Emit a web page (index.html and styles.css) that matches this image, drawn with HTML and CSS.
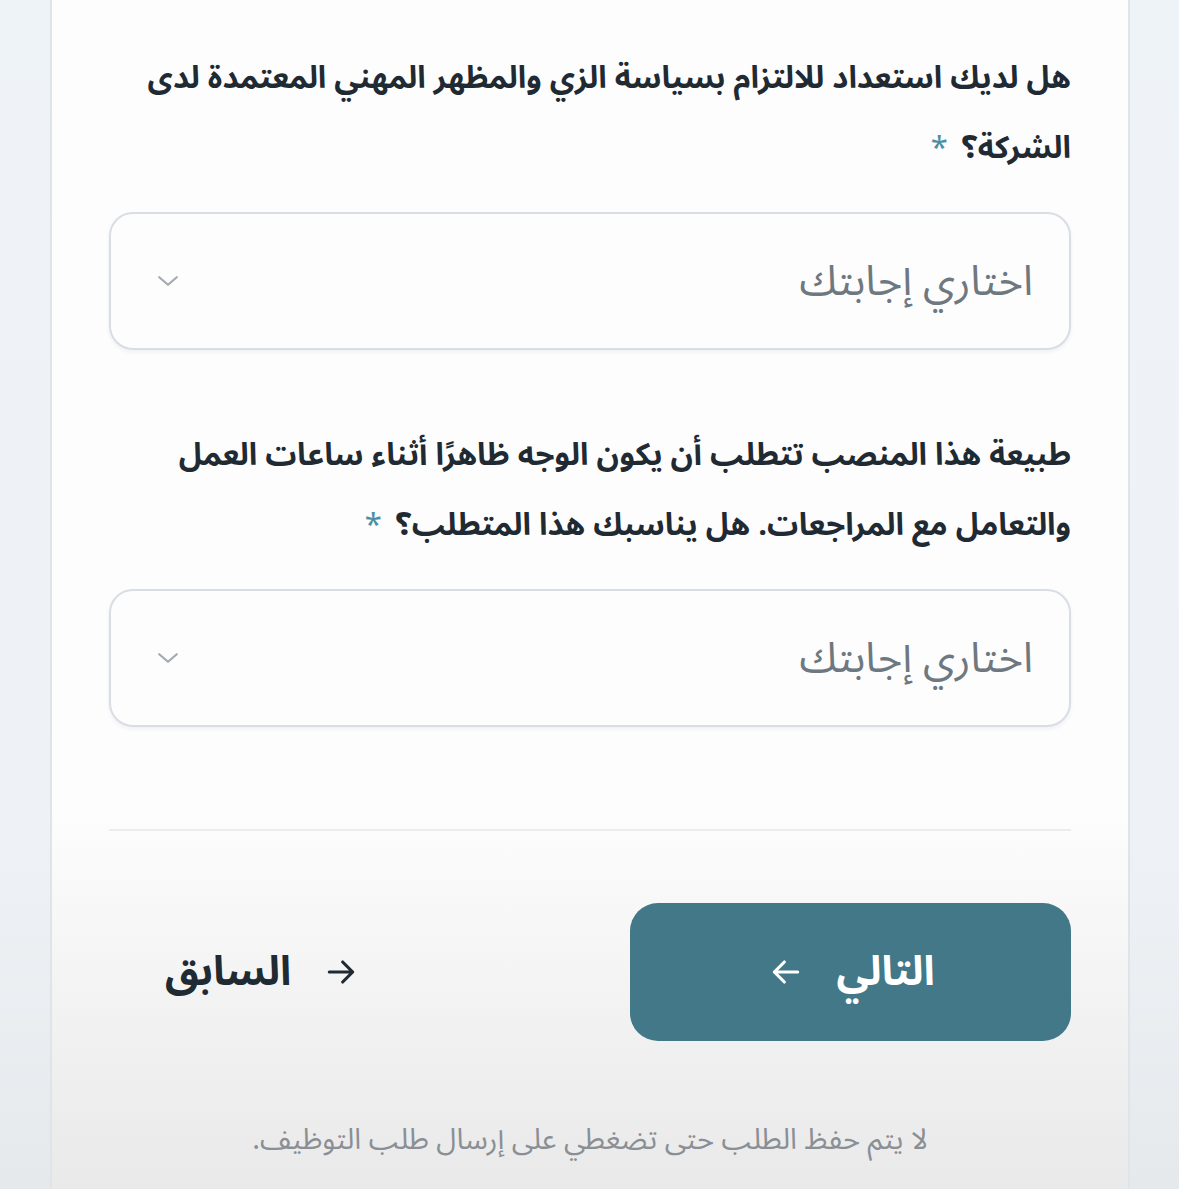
FILE: index.html
```html
<!DOCTYPE html>
<html lang="ar" dir="rtl">
<head>
    <meta charset="UTF-8">
    <meta name="viewport" content="width=device-width, initial-scale=1.0">
    <title>طلب التوظيف</title>
    <link rel="stylesheet" href="styles.css">
</head>
<body>

    <!-- Application step -->
    <div class="card">
        <form class="step">
            <div class="form-group">
                <label for="q-dress">هل لديك استعداد للالتزام بسياسة الزي والمظهر المهني المعتمدة لدى الشركة؟<span class="req">*</span></label>
                <div class="select">
                    <span class="placeholder">اختاري إجابتك</span>
                    <svg class="chevron" viewBox="0 0 24 24" width="30" height="30"><path d="M5 9l7 6 7-6" fill="none" stroke="#a3aab0" stroke-width="1.8" stroke-linecap="round" stroke-linejoin="round"/></svg>
                </div>
            </div>

            <div class="form-group">
                <label for="q-face">طبيعة هذا المنصب تتطلب أن يكون الوجه ظاهرًا أثناء ساعات العمل والتعامل مع المراجعات. هل يناسبك هذا المتطلب؟<span class="req">*</span></label>
                <div class="select">
                    <span class="placeholder">اختاري إجابتك</span>
                    <svg class="chevron" viewBox="0 0 24 24" width="30" height="30"><path d="M5 9l7 6 7-6" fill="none" stroke="#a3aab0" stroke-width="1.8" stroke-linecap="round" stroke-linejoin="round"/></svg>
                </div>
            </div>

            <hr class="divider">

            <div class="actions">
                <button type="button" class="btn btn-next">
                    التالي
                    <svg viewBox="0 0 24 24" width="40" height="40"><path d="M19 12H5M11 6l-6 6 6 6" fill="none" stroke="#fff" stroke-width="1.9" stroke-linecap="round" stroke-linejoin="round"/></svg>
                </button>
                <button type="button" class="btn btn-prev">
                    <svg viewBox="0 0 24 24" width="40" height="40"><path d="M5 12h14M13 6l6 6-6 6" fill="none" stroke="#1f2a33" stroke-width="1.9" stroke-linecap="round" stroke-linejoin="round"/></svg>
                    السابق
                </button>
            </div>

            <p class="note">لا يتم حفظ الطلب حتى تضغطي على إرسال طلب التوظيف.</p>
        </form>
    </div>

</body>
</html>
```

FILE: styles.css
```css
/* Reset */
* { margin: 0; padding: 0; box-sizing: border-box; }

body {
    font-family: "Noto Sans Arabic", "Noto Kufi Arabic", "DejaVu Sans", sans-serif;
    background: linear-gradient(to bottom, #eef3f8 0%, #eef2f6 70%, #e6e9ec 100%);
    height: 100vh;
    overflow: hidden;
}

/* Form card */
.card {
    margin: 0 49px 0 50px;
    height: 100%;
    border-left: 2px solid #dfe3ea;
    border-right: 2px solid #dfe3ea;
    background: linear-gradient(to bottom, #fdfdfe 0%, #fdfdfe 68%, #f2f2f2 85%, #e9e9e9 100%);
    padding: 43px 57px 0;
}

.form-group {
    margin-bottom: 70px;
}

label {
    display: block;
    font-size: 31px;
    font-weight: bold;
    line-height: 70px;
    color: #1f2a33;
    margin-bottom: 29px;
}

.req {
    display: inline-block;
    color: #4a8fa0;
    font-weight: normal;
    margin-right: 14px;
}

.select {
    height: 138px;
    display: flex;
    align-items: center;
    justify-content: space-between;
    padding: 0 36px 0 42px;
    background: #fdfdfe;
    border: 2px solid #d9dee5;
    border-radius: 24px;
    box-shadow: 0 2px 4px rgba(30, 40, 60, 0.06);
}

.placeholder {
    font-size: 42px;
    color: #6e7880;
}

.divider {
    border: none;
    border-top: 2px solid #ececec;
    margin-top: 102px;
}

.actions {
    display: flex;
    justify-content: space-between;
    align-items: center;
    margin-top: 72px;
}

.btn {
    display: flex;
    align-items: center;
    justify-content: center;
    gap: 30px;
    font-family: inherit;
    font-size: 41px;
    font-weight: bold;
    border: none;
    cursor: pointer;
}

.btn-next {
    width: 441px;
    height: 138px;
    background-color: #427888;
    color: white;
    border-radius: 28px;
}

.btn-prev {
    background: none;
    color: #1f2a33;
    padding: 0 56px;
    height: 138px;
    gap: 30px;
}

.note {
    text-align: center;
    font-size: 29px;
    color: #8a8f95;
    margin-top: 68px;
}
```
